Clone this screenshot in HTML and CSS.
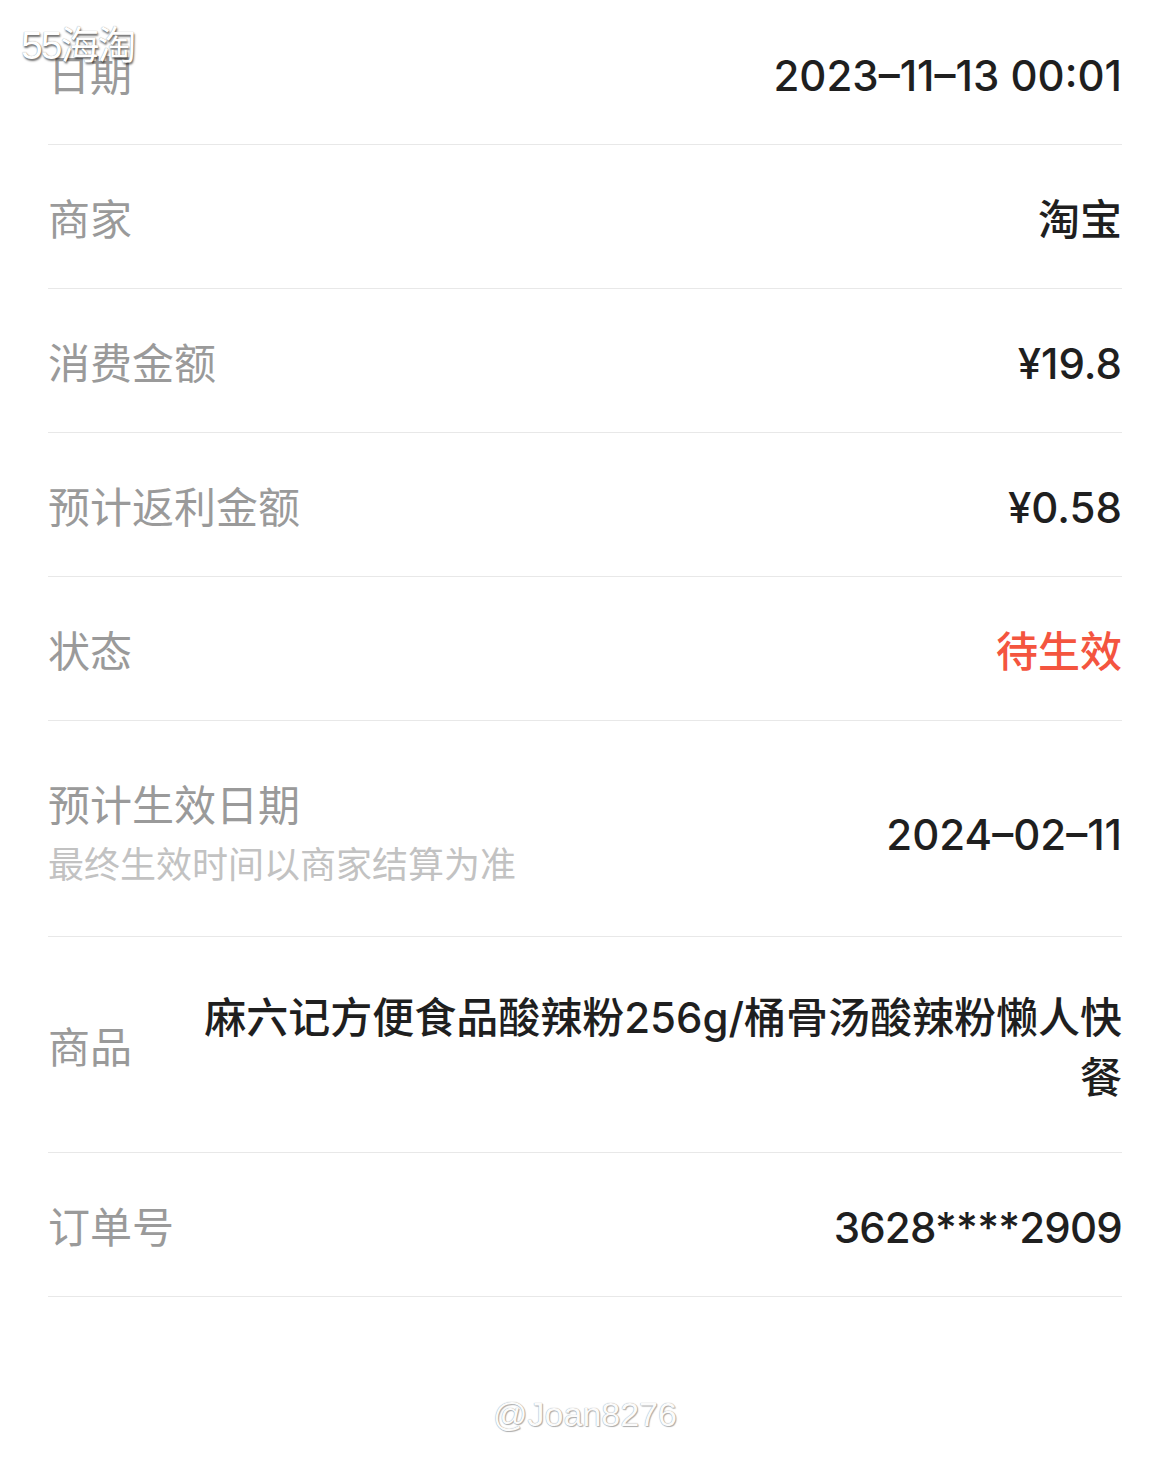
FILE: index.html
```html
<!DOCTYPE html>
<html lang="zh-CN">
<head>
  <meta charset="UTF-8" />
  <meta name="viewport" content="width=device-width, initial-scale=1.0"/>
  <title>订单详情</title>
  <link rel="stylesheet" href="styles.css">
</head>
<body>

  <div class="mark-top">55海淘</div>

  <div class="detail">
    <div class="row row-first">
      <span class="label">日期</span>
      <span class="value num">2023–11–13 00:01</span>
    </div>
    <div class="row">
      <span class="label">商家</span>
      <span class="value">淘宝</span>
    </div>
    <div class="row">
      <span class="label">消费金额</span>
      <span class="value num">¥19.8</span>
    </div>
    <div class="row">
      <span class="label">预计返利金额</span>
      <span class="value num">¥0.58</span>
    </div>
    <div class="row">
      <span class="label">状态</span>
      <span class="value status-pending">待生效</span>
    </div>
    <div class="row row-tall">
      <div class="label-block">
        <div class="label">预计生效日期</div>
        <div class="hint">最终生效时间以商家结算为准</div>
      </div>
      <span class="value num value-shift">2024–02–11</span>
    </div>
    <div class="row row-goods">
      <span class="label">商品</span>
      <span class="value goods-name">麻六记方便食品酸辣粉256g/桶骨汤酸辣粉懒人快餐</span>
    </div>
    <div class="row">
      <span class="label">订单号</span>
      <span class="value num order-no">3628****2909</span>
    </div>
  </div>

  <div class="mark-bottom">@Joan8276</div>

</body>
</html>
```

FILE: styles.css
```css
body {
  margin: 0;
  background-color: #fff;
  font-family: Inter, "Noto Sans CJK SC", sans-serif;
  color: #222;
}

.detail {
  padding: 1px 48px 0 48px;
}

.row {
  display: flex;
  justify-content: space-between;
  align-items: center;
  min-height: 143px;
  border-bottom: 1px solid #e8e8e8;
}

.label {
  font-size: 42px;
  color: #9a9a9a;
  white-space: nowrap;
}

.value {
  font-size: 42px;
  font-weight: 500;
  color: #1f1f1f;
  text-align: right;
}

/* latin digits sit a bit high next to the CJK labels */
.num {
  padding-top: 6px;
}

.order-no {
  letter-spacing: -0.8px;
}

.status-pending {
  color: #f4553f;
}

.row-tall {
  min-height: 0;
  padding: 57px 0 40px 0;
}

.label-block .label {
  line-height: 56px;
}

.hint {
  font-size: 36px;
  line-height: 62px;
  color: #c2c2c2;
}

.value-shift {
  padding-bottom: 12px;
}

.row-goods {
  min-height: 215px;
}

.goods-name {
  flex: 1;
  margin-left: 71px;
  line-height: 60px;
  padding-top: 6px;
}

.mark-top {
  position: absolute;
  top: 14px;
  left: 21px;
  font-family: "Liberation Sans", "Noto Sans CJK SC", sans-serif;
  font-size: 39px;
  letter-spacing: -2px;
  color: #fff;
  text-shadow: 1px 2px 2px rgba(0, 0, 0, 0.55), 0 0 1px rgba(0, 0, 0, 0.45);
}

.mark-bottom {
  text-align: center;
  padding-top: 98px;
  font-family: "Liberation Sans", sans-serif;
  font-size: 34px;
  color: #fbfbfb;
  text-shadow: 0 0 1px #8a8a8a, 1px 1px 1px #b0b0b0;
}
```
